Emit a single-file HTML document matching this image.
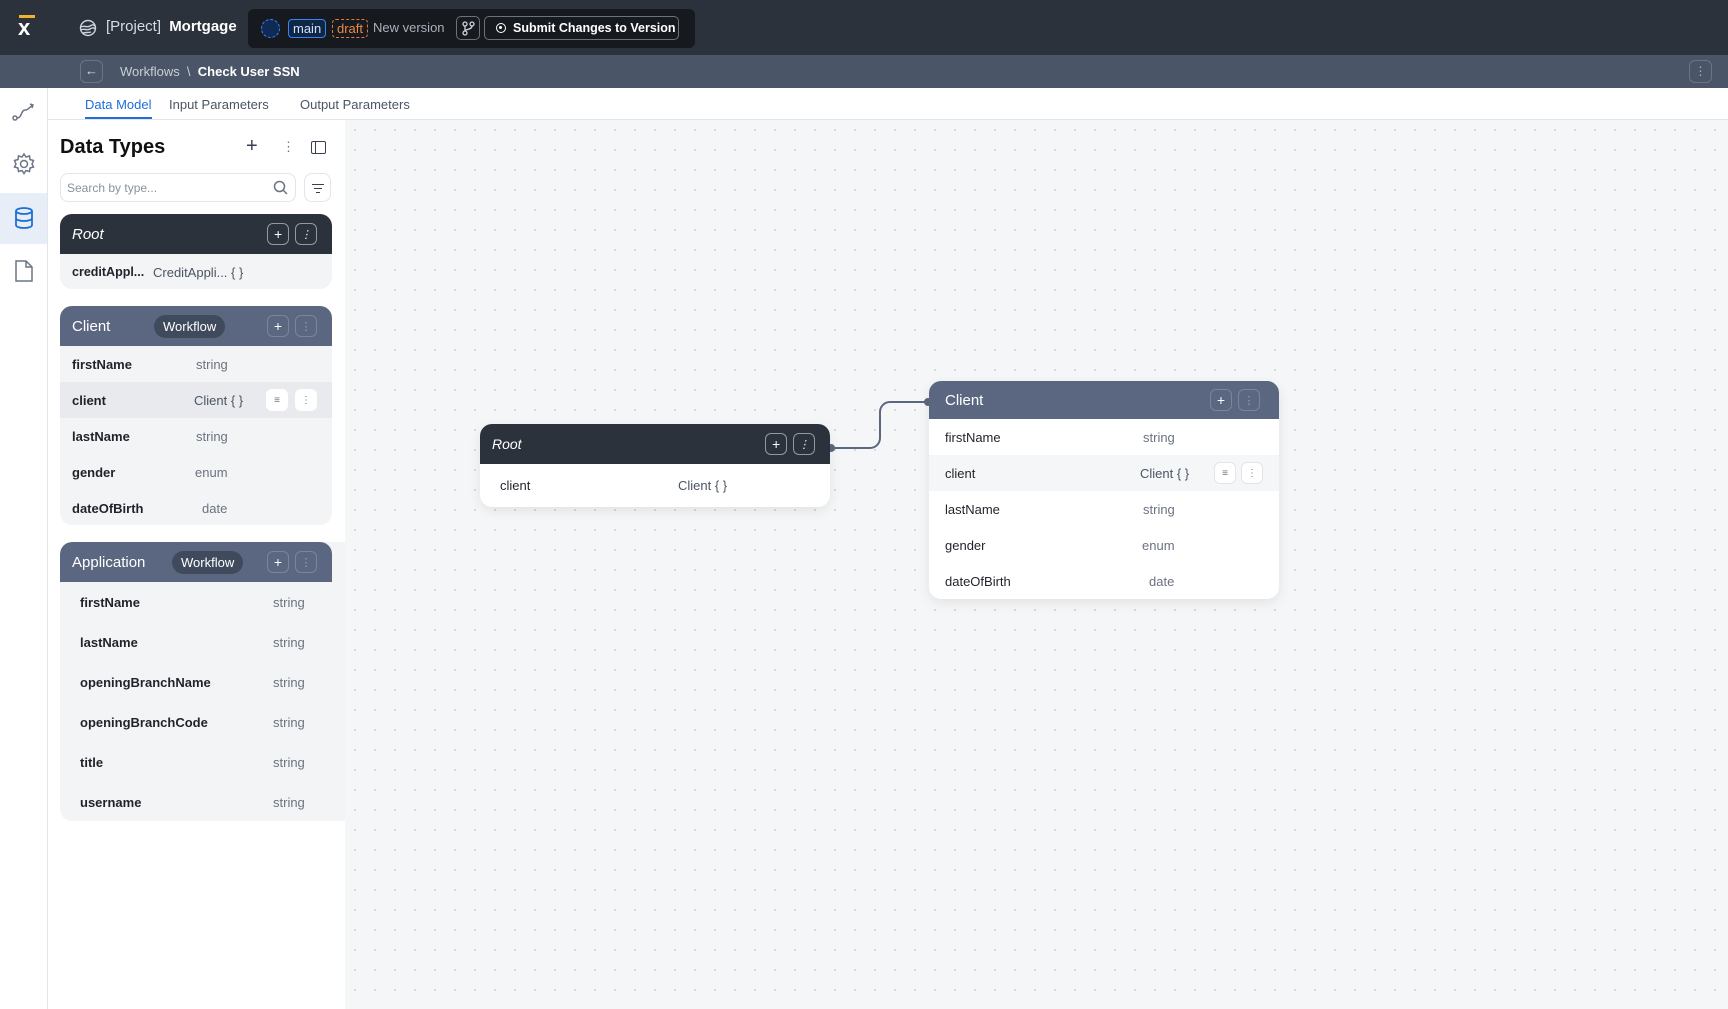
<!DOCTYPE html>
<html><head><meta charset="utf-8"><style>
*{box-sizing:border-box;margin:0;padding:0}
body{width:1728px;height:1009px;overflow:hidden;font-family:"Liberation Sans",sans-serif;background:#fff;position:relative;font-size:13px;color:#1f2329;white-space:nowrap}
.abs{position:absolute}
.top{left:0;top:0;width:1728px;height:55px;background:#2b323c}
.bar2{left:0;top:55px;width:1728px;height:33px;background:#4a5567}
.tabs{left:48px;top:88px;width:1680px;height:32px;background:#fff;border-bottom:1px solid #e3e5e8}
.rail{left:0;top:88px;width:48px;height:921px;background:#fff;border-right:1px solid #e3e5e8}
.side{left:48px;top:120px;width:297px;height:889px;background:#fff}
.canvas{left:345px;top:120px;width:1383px;height:889px;background-color:#f5f6f7;background-image:radial-gradient(circle,#d3d6da 1px,transparent 1.2px);background-size:20px 20px}
.card{position:absolute;border-radius:12px;overflow:hidden;background:#f3f4f6}
.hdr{height:40px;display:flex;align-items:center;padding:0 12px;color:#fff;font-size:15px;position:relative}
.row{height:36px;display:flex;align-items:center;position:relative;font-size:13px}
.row .n{position:absolute;left:12px;font-weight:bold;color:#1f2329}
.row .t{position:absolute;color:#6b7280}
.ib{position:absolute;width:22px;height:22px;border:1px solid rgba(255,255,255,.5);border-radius:6px;color:#fff;display:flex;align-items:center;justify-content:center;font-size:14px}
.pill{position:absolute;background:#3f4a5c;border-radius:14px;padding:4px 9px;font-size:13px}
.wb{position:absolute;width:22px;height:22px;background:#fff;border-radius:6px;border:1px solid #e3e5e8;display:flex;align-items:center;justify-content:center;font-size:10px;color:#6b7280}
</style></head><body>
<div class="abs top">
 <div class="abs" style="left:19px;top:15px;width:16px;height:3px;background:#f2b230"></div>
 <div class="abs" style="left:18px;top:15px;color:#fff;font-size:22px;font-weight:bold">x</div>
 <svg class="abs" style="left:79px;top:19px" width="18" height="18" viewBox="0 0 18 18" fill="none" stroke="#cfd4db" stroke-width="1.4"><circle cx="9" cy="9" r="7.5"/><path d="M2 8c3-2 6 1 9-1s4-1 5 0M2 11c3-2 6 1 9-1s4-1 5 0M4 14c3-1 5 0 8-1"/></svg>
 <div class="abs" style="left:106px;top:18px;color:#d8dce2;font-size:15px">[Project] <b style="color:#fff;margin-left:4px">Mortgage</b></div>
 <div class="abs" style="left:248px;top:9px;width:447px;height:39px;background:#16191e;border-radius:6px">
  <div class="abs" style="left:13px;top:10px;width:19px;height:19px;border-radius:50%;border:1px dashed #3b82f6;background:#0f2a55"></div>
  <div class="abs" style="left:40px;top:10px;height:19px;padding:0 4px;border:1px solid #3b82f6;border-radius:4px;color:#cfe0ff;font-size:13px;line-height:17px;background:#0f2744">main</div>
  <div class="abs" style="left:84px;top:10px;height:19px;padding:0 4px;border:1px dashed #e07a3a;border-radius:4px;color:#e88a4a;font-size:13px;line-height:17px">draft</div>
  <div class="abs" style="left:125px;top:11px;color:#aab1bb;font-size:13px">New version</div>
  <div class="abs" style="left:208px;top:7px;width:24px;height:24px;border:1px solid #6b7280;border-radius:5px"><svg class="abs" style="left:5px;top:4px" width="13" height="15" fill="none" stroke="#cfd4db" stroke-width="1.3"><circle cx="3" cy="3" r="2"/><circle cx="10" cy="3" r="2"/><circle cx="3" cy="12" r="2"/><path d="M3 5v5M10 5c0 4-7 3-7 5"/></svg></div>
  <div class="abs" style="left:236px;top:7px;width:195px;height:24px;border:1px solid #6b7280;border-radius:5px;color:#fff;font-size:12.5px;font-weight:bold;line-height:22px;padding-left:28px">Submit Changes to Version
   <div class="abs" style="left:11px;top:6px;width:10px;height:10px;border:1.5px solid #fff;border-radius:50%"><div style="margin:2px;width:3px;height:3px;background:#fff;border-radius:50%"></div></div></div>
 </div>
</div>
<div class="abs bar2">
 <div class="abs" style="left:80px;top:5px;width:23px;height:23px;border:1px solid #6b7585;border-radius:6px;color:#d8dce2;text-align:center;line-height:20px;font-size:13px">←</div>
 <div class="abs" style="left:120px;top:9px;color:#c9ced6;font-size:13px">Workflows&nbsp;&nbsp;\&nbsp;&nbsp;<b style="color:#fff">Check User SSN</b></div>
 <div class="abs" style="left:1689px;top:5px;width:23px;height:23px;border:1px solid #6b7585;border-radius:6px;color:#aab1bb;text-align:center;line-height:21px;font-size:12px">⋮</div>
</div>
<div class="abs tabs">
 <div class="abs" style="left:37px;top:9px;color:#1d6fd6;font-size:13px">Data Model</div>
 <div class="abs" style="left:37px;top:29px;width:67px;height:2px;background:#1d6fd6"></div>
 <div class="abs" style="left:121px;top:9px;color:#4b5563;font-size:13px">Input Parameters</div>
 <div class="abs" style="left:252px;top:9px;color:#4b5563;font-size:13px">Output Parameters</div>
</div>
<div class="abs rail">
 <svg class="abs" style="left:12px;top:14px" width="24" height="20" viewBox="0 0 24 20" fill="none" stroke="#6b7585" stroke-width="1.5"><circle cx="3" cy="16" r="2"/><path d="M5 16c5 0 4-8 8-8s4-3 8-5M18 2l3 1-1 3"/></svg>
 <svg class="abs" style="left:12px;top:64px" width="24" height="24" viewBox="0 0 24 24" fill="none" stroke="#6b7585" stroke-width="1.5"><circle cx="12" cy="12" r="3.5"/><path d="M12 2l2 3 3.5-1 .5 3.5 3.5 1-1.5 3.5 1.5 3-3.5 1-.5 3.5-3.5-1-2 3-2-3-3.5 1-.5-3.5-3.5-1 1.5-3-1.5-3.5 3.5-1 .5-3.5 3.5 1z"/></svg>
 <div class="abs" style="left:0;top:105px;width:47px;height:51px;background:#e8eef7"></div>
 <svg class="abs" style="left:13px;top:118px" width="22" height="24" viewBox="0 0 22 24" fill="none" stroke="#1d6fd6" stroke-width="1.8"><ellipse cx="11" cy="5" rx="8" ry="3"/><path d="M3 5v14c0 2 4 3 8 3s8-1 8-3V5M3 12c0 2 4 3 8 3s8-1 8-3"/></svg>
 <svg class="abs" style="left:14px;top:171px" width="20" height="24" viewBox="0 0 20 24" fill="none" stroke="#6b7585" stroke-width="1.5"><path d="M2 2h10l6 6v14H2z M12 2v6h6"/></svg>
</div>
<div class="abs side">
 <div class="abs" style="left:12px;top:16px;font-size:20px;font-weight:bold;color:#111">Data Types</div>
 <div class="abs" style="left:198px;top:15px;font-size:20px;color:#374151">+</div>
 <div class="abs" style="left:234px;top:19px;font-size:13px;color:#6b7280">⋮</div>
 <div class="abs" style="left:263px;top:21px;width:15px;height:13px;border:1.6px solid #374151;border-radius:2px"><div style="width:4px;height:100%;border-right:1.6px solid #374151"></div></div>
 <div class="abs" style="left:12px;top:53px;width:236px;height:29px;border:1px solid #e3e5e8;border-radius:8px;color:#8a929c;padding:7px 6px;font-size:12px">Search by type...
  <svg class="abs" style="left:212px;top:6px" width="15" height="15" fill="none" stroke="#6b7280" stroke-width="1.5"><circle cx="6.5" cy="6.5" r="5"/><path d="M10.5 10.5l3.5 3.5"/></svg></div>
 <div class="abs" style="left:256px;top:53px;width:27px;height:29px;border:1px solid #e3e5e8;border-radius:8px"><div class="abs" style="left:7px;top:10px;width:12px;border-top:1.4px solid #374151"></div><div class="abs" style="left:9px;top:14px;width:8px;border-top:1.4px solid #374151"></div><div class="abs" style="left:11px;top:18px;width:4px;border-top:1.4px solid #374151"></div></div>

 <div class="card" style="left:12px;top:94px;width:272px;height:75px">
  <div class="hdr" style="background:#2b323c;font-style:italic">Root<div class="ib" style="left:207px;top:9px">+</div><div class="ib" style="left:235px;top:9px;font-size:11px">⋮</div></div>
  <div class="row"><span class="n" style="font-size:12.5px">creditAppl...</span><span class="t" style="left:93px;color:#4b5563">CreditAppli... { }</span></div>
 </div>
 <div class="card" style="left:12px;top:186px;width:272px;height:219px">
  <div class="hdr" style="background:#5b6780">Client<span class="pill" style="left:94px;top:9px">Workflow</span><div class="ib" style="left:207px;top:9px;border-color:rgba(255,255,255,.2)">+</div><div class="ib" style="left:235px;top:9px;font-size:11px;border-color:rgba(255,255,255,.2);color:#9aa3b2">⋮</div></div>
  <div class="row"><span class="n">firstName</span><span class="t" style="left:136px">string</span></div>
  <div class="row" style="background:#e8eaee"><span class="n">client</span><span class="t" style="left:134px;color:#4b5563">Client { }</span><div class="wb" style="left:206px;top:7px;border:none">≡</div><div class="wb" style="left:235px;top:7px;border:none">⋮</div></div>
  <div class="row"><span class="n">lastName</span><span class="t" style="left:136px">string</span></div>
  <div class="row"><span class="n">gender</span><span class="t" style="left:135px">enum</span></div>
  <div class="row"><span class="n">dateOfBirth</span><span class="t" style="left:142px">date</span></div>
 </div>
 <div class="card" style="left:12px;top:422px;width:285px;height:279px;border-radius:12px 0 0 12px">
  <div class="hdr" style="background:#5b6780;width:272px;border-radius:12px 12px 0 0">Application<span class="pill" style="left:112px;top:9px">Workflow</span><div class="ib" style="left:207px;top:9px;border-color:rgba(255,255,255,.2)">+</div><div class="ib" style="left:235px;top:9px;font-size:11px;border-color:rgba(255,255,255,.2);color:#9aa3b2">⋮</div></div>
  <div class="row" style="height:40px"><span class="n" style="left:20px">firstName</span><span class="t" style="left:213px">string</span></div>
  <div class="row" style="height:40px"><span class="n" style="left:20px">lastName</span><span class="t" style="left:213px">string</span></div>
  <div class="row" style="height:40px"><span class="n" style="left:20px">openingBranchName</span><span class="t" style="left:213px">string</span></div>
  <div class="row" style="height:40px"><span class="n" style="left:20px">openingBranchCode</span><span class="t" style="left:213px">string</span></div>
  <div class="row" style="height:40px"><span class="n" style="left:20px">title</span><span class="t" style="left:213px">string</span></div>
  <div class="row" style="height:40px"><span class="n" style="left:20px">username</span><span class="t" style="left:213px">string</span></div>
 </div>
</div>
<div class="abs canvas"></div>
<svg class="abs" style="left:0;top:0" width="1728" height="1009"><path d="M830 448H870a10 10 0 0 0 10-10V412a10 10 0 0 1 10-10H929" fill="none" stroke="#5b6780" stroke-width="2"/><circle cx="831" cy="448" r="4" fill="#5b6780"/><circle cx="928" cy="402" r="4" fill="#5b6780"/></svg>
<div class="card" style="left:480px;top:424px;width:350px;height:83px;background:#fff;box-shadow:0 4px 12px rgba(0,0,0,.08)">
 <div class="hdr" style="background:#2b323c;font-style:italic;font-size:14px">Root<div class="ib" style="left:285px;top:9px">+</div><div class="ib" style="left:313px;top:9px;font-size:11px">⋮</div></div>
 <div class="row" style="height:43px"><span class="n" style="left:20px;font-weight:normal">client</span><span class="t" style="left:198px;color:#4b5563">Client { }</span></div>
</div>
<div class="card" style="left:929px;top:381px;width:350px;height:218px;background:#fff;box-shadow:0 4px 12px rgba(0,0,0,.08)">
 <div class="hdr" style="background:#5b6780;height:38px;padding-left:16px">Client<div class="ib" style="left:281px;top:8px;border-color:rgba(255,255,255,.2)">+</div><div class="ib" style="left:309px;top:8px;font-size:11px;border-color:rgba(255,255,255,.2);color:#9aa3b2">⋮</div></div>
 <div class="row"><span class="n" style="left:16px;font-weight:normal">firstName</span><span class="t" style="left:214px">string</span></div>
 <div class="row" style="background:#f5f6f8"><span class="n" style="left:16px;font-weight:normal">client</span><span class="t" style="left:211px;color:#4b5563">Client { }</span><div class="wb" style="left:285px;top:7px">≡</div><div class="wb" style="left:312px;top:7px">⋮</div></div>
 <div class="row"><span class="n" style="left:16px;font-weight:normal">lastName</span><span class="t" style="left:214px">string</span></div>
 <div class="row"><span class="n" style="left:16px;font-weight:normal">gender</span><span class="t" style="left:213px">enum</span></div>
 <div class="row"><span class="n" style="left:16px;font-weight:normal">dateOfBirth</span><span class="t" style="left:220px">date</span></div>
</div>
</body></html>
